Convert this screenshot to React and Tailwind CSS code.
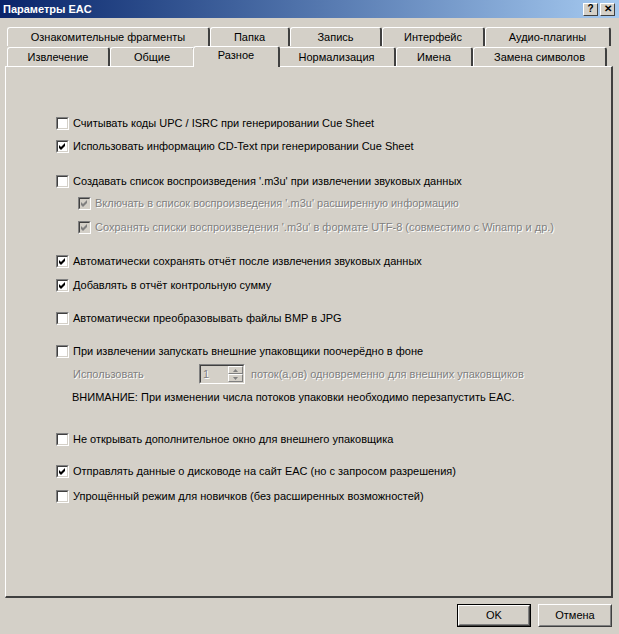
import React from 'react';

const font = { fontFamily: '"Liberation Sans", Arial, sans-serif' };

const CheckBox = ({ checked, disabled }) => (
    <div className="w-[13px] h-[13px] shrink-0 border border-t-[#808080] border-l-[#808080] border-b-white border-r-white">
        <div className={`w-full h-full border border-t-[#404040] border-l-[#404040] border-b-[#d4d0c8] border-r-[#d4d0c8] flex items-center justify-center ${disabled ? 'bg-[#d4d0c8]' : 'bg-white'}`}>
            {checked && (
                <svg width="7" height="7" viewBox="0 0 7 7">
                    <path d="M0 2 L2 4 L6 0 L6 3 L2 7 L0 5 Z" fill={disabled ? '#808080' : '#000'} />
                </svg>
            )}
        </div>
    </div>
);

const Row = ({ checked, disabled, indent, label, className = '' }) => (
    <div className={`flex items-center h-[16px] ${indent ? 'pl-[23px]' : 'pl-[1px]'} ${className}`}>
        <CheckBox checked={checked} disabled={disabled} />
        <span className={`ml-[4px] whitespace-nowrap ${disabled ? 'text-[#808080] [text-shadow:1px_1px_0_#fff]' : 'text-black'}`}>{label}</span>
    </div>
);

const Tab = ({ label, w, selected }) => (
    <div
        className={`flex items-center justify-center border-t border-l border-r-2 border-t-white border-l-white border-r-[#404040] rounded-t-[3px] bg-[#d4d0c8] ${selected ? 'h-[21px] -mx-[2px] -mb-[1px] relative z-10 pb-[3px] border-b-0' : 'h-[19px] pt-[1px]'}`}
        style={{ width: w }}
    >
        {label}
    </div>
);

const Button = ({ label, isDefault }) => (
    <div className={`w-[74px] h-[23px] ${isDefault ? 'border border-black' : ''}`}>
        <div className="w-full h-full border border-t-white border-l-white border-b-[#404040] border-r-[#404040]">
            <div className="w-full h-full border border-t-[#d4d0c8] border-l-[#d4d0c8] border-b-[#808080] border-r-[#808080] flex items-center justify-center">
                {label}
            </div>
        </div>
    </div>
);

const App = () => {
    const row1 = [
        ['Ознакомительные фрагменты', 203],
        ['Папка', 80],
        ['Запись', 92],
        ['Интерфейс', 103],
        ['Аудио-плагины', 126],
    ];
    const row2 = [
        ['Извлечение', 103],
        ['Общие', 85],
        ['Разное', 87, true],
        ['Нормализация', 118],
        ['Имена', 77],
        ['Замена символов', 134],
    ];

    return (
        <div className="w-[619px] h-[634px] bg-[#d4d0c8] text-[11px] text-black overflow-hidden" style={font}>
            {/* title bar */}
            <div className="h-[18px] flex items-center justify-between pl-[3px] pr-[4px] bg-gradient-to-r from-[#0a246a] to-[#a6caf0]">
                <span className="text-white font-bold text-[11px]">Параметры EAC</span>
                <div className="flex gap-[2px]">
                    {['?', '✕'].map((c) => (
                        <div key={c} className="w-[15px] h-[13px] bg-[#d4d0c8] border border-t-white border-l-white border-b-[#404040] border-r-[#404040] flex items-center justify-center text-[10px] font-bold leading-none">
                            {c}
                        </div>
                    ))}
                </div>
            </div>

            {/* tabs */}
            <div className="pt-[9px] pl-[7px]">
                <div className="flex">
                    {row1.map(([l, w]) => <Tab key={l} label={l} w={w} />)}
                </div>
                <div className="flex items-end">
                    {row2.map(([l, w, s]) => <Tab key={l} label={l} w={w} selected={s} />)}
                </div>
            </div>

            {/* panel */}
            <div className="ml-[5px] w-[608px] h-[532px] border-t border-l border-t-white border-l-white border-r-2 border-b-2 border-r-[#404040] border-b-[#404040] pl-[49px] pt-[48px]">
                <Row label="Считывать коды UPC / ISRC при генерировании Cue Sheet" />
                <Row checked className="mt-[7px]" label="Использовать информацию CD-Text при генерировании Cue Sheet" />
                <Row className="mt-[19px]" label="Создавать список воспроизведения '.m3u' при извлечении звуковых данных" />
                <Row checked disabled indent className="mt-[6px]" label="Включать в список воспроизведения '.m3u' расширенную информацию" />
                <Row checked disabled indent className="mt-[8px]" label="Сохранять списки воспроизведения '.m3u' в формате UTF-8 (совместимо с Winamp и др.)" />
                <Row checked className="mt-[18px]" label="Автоматически сохранять отчёт после извлечения звуковых данных" />
                <Row checked className="mt-[8px]" label="Добавлять в отчёт контрольную сумму" />
                <Row className="mt-[17px]" label="Автоматически преобразовывать файлы BMP в JPG" />
                <Row className="mt-[17px]" label="При извлечении запускать внешние упаковщики поочерёдно в фоне" />

                <div className="mt-[5px] h-[20px] flex items-center pl-[18px] text-[#808080] [text-shadow:1px_1px_0_#fff]">
                    <span className="w-[126px]">Использовать</span>
                    <div className="w-[46px] h-[20px] border border-t-[#808080] border-l-[#808080] border-b-white border-r-white">
                        <div className="w-full h-full border border-t-[#404040] border-l-[#404040] border-b-[#d4d0c8] border-r-[#d4d0c8] flex">
                            <span className="flex-1 pl-[2px] leading-[16px]">1</span>
                            <div className="w-[15px] flex flex-col">
                                <div className="h-[8px] border border-t-white border-l-white border-b-[#808080] border-r-[#808080] flex items-center justify-center">
                                    <svg width="5" height="3" viewBox="0 0 5 3"><path d="M2.5 0 L5 3 L0 3 Z" fill="#808080" /></svg>
                                </div>
                                <div className="h-[8px] border border-t-white border-l-white border-b-[#808080] border-r-[#808080] flex items-center justify-center">
                                    <svg width="5" height="3" viewBox="0 0 5 3"><path d="M0 0 L5 0 L2.5 3 Z" fill="#808080" /></svg>
                                </div>
                            </div>
                        </div>
                    </div>
                    <span className="ml-[6px] whitespace-nowrap">поток(а,ов) одновременно для внешних упаковщиков</span>
                </div>

                <div className="mt-[5px] h-[16px] flex items-center pl-[17px] whitespace-nowrap">
                    ВНИМАНИЕ: При изменении числа потоков упаковки необходимо перезапустить EAC.
                </div>

                <Row className="mt-[26px]" label="Не открывать дополнительное окно для внешнего упаковщика" />
                <Row checked className="mt-[16px]" label="Отправлять данные о дисководе на сайт EAC (но с запросом разрешения)" />
                <Row className="mt-[9px]" label="Упрощённый режим для новичков (без расширенных возможностей)" />
            </div>

            {/* buttons */}
            <div className="flex justify-end gap-[7px] pr-[7px] mt-[6px]">
                <Button label="OK" isDefault />
                <Button label="Отмена" />
            </div>
        </div>
    );
};

export default App;
